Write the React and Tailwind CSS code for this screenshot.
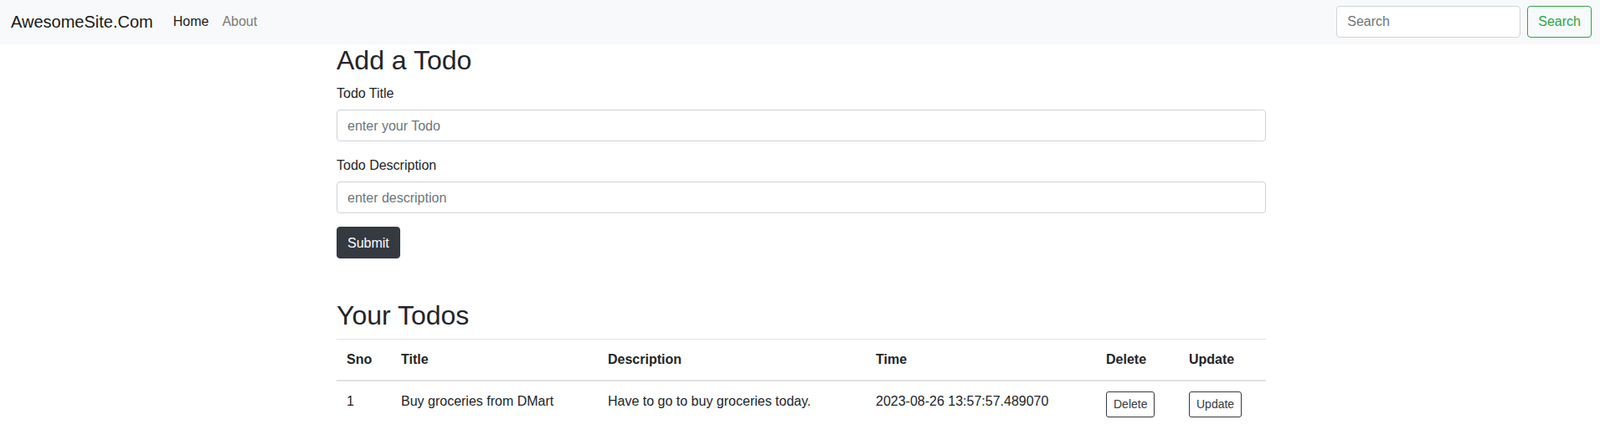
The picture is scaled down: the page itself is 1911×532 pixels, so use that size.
export default function App() {
  return (
    <div className="min-h-screen bg-white text-[#212529] text-[16px] leading-[24px] font-['Liberation_Sans',Arial,sans-serif]">
      <nav className="h-[53px] bg-[#f8f9fa] flex items-center pl-[13px] pr-[10px] pb-[2px]">
        <a href="#" className="text-[20px] leading-[30px] text-[#1a1a1a] mr-4">AwesomeSite.Com</a>
        <ul className="flex">
          <li><a href="#" className="block px-2 py-2 text-[#1a1a1a]">Home</a></li>
          <li><a href="#" className="block px-2 py-2 text-[#7a7a7a]">About</a></li>
        </ul>
        <form className="ml-auto flex" onSubmit={(e) => e.preventDefault()}>
          <input
            type="search"
            placeholder="Search"
            className="w-[220px] h-[38px] px-3 mr-2 border border-[#ced4da] rounded-[4px] bg-white text-[16px] placeholder:text-[#6c757d] outline-none"
          />
          <button type="submit" className="h-[38px] px-3 border border-[#28a745] text-[#28a745] rounded-[4px] bg-transparent text-[16px]">
            Search
          </button>
        </form>
      </nav>

      <div className="mx-auto w-[1113px] pl-[3px]">
        <h2 className="text-[32px] leading-[38.4px] font-normal mb-2">Add a Todo</h2>
        <form onSubmit={(e) => e.preventDefault()}>
          <div className="mb-4">
            <label className="block pt-[1px] mb-[7px]">Todo Title</label>
            <input
              type="text"
              placeholder="enter your Todo"
              className="block w-full h-[38px] px-3 pt-[2px] border border-[#ced4da] rounded-[4px] bg-white placeholder:text-[#6c757d] outline-none"
            />
          </div>
          <div className="mb-4">
            <label className="block pt-[1px] mb-[7px]">Todo Description</label>
            <input
              type="text"
              placeholder="enter description"
              className="block w-full h-[38px] px-3 pt-[2px] border border-[#ced4da] rounded-[4px] bg-white placeholder:text-[#6c757d] outline-none"
            />
          </div>
          <button type="submit" className="h-[38px] px-3 pt-[2px] bg-[#343a40] border border-[#343a40] text-white rounded-[4px]">
            Submit
          </button>
        </form>

        <h2 className="mt-[49px] text-[32px] leading-[38.4px] font-normal mb-2">Your Todos</h2>
        <table className="w-full table-fixed border-collapse">
          <colgroup>
            <col className="w-[65px]" />
            <col className="w-[247px]" />
            <col className="w-[320px]" />
            <col className="w-[275px]" />
            <col className="w-[99px]" />
            <col className="w-[104px]" />
          </colgroup>
          <thead>
            <tr>
              {["Sno", "Title", "Description", "Time", "Delete", "Update"].map((h) => (
                <th key={h} className="text-left font-bold p-3 align-bottom border-t border-b-2 border-[#dee2e6]">
                  {h}
                </th>
              ))}
            </tr>
          </thead>
          <tbody>
            <tr>
              <td className="p-3 align-top border-t border-[#dee2e6]">1</td>
              <td className="p-3 align-top border-t border-[#dee2e6]">Buy groceries from DMart</td>
              <td className="p-3 align-top border-t border-[#dee2e6]">Have to go to buy groceries today.</td>
              <td className="p-3 align-top border-t border-[#dee2e6]">2023-08-26 13:57:57.489070</td>
              <td className="p-3 align-top border-t border-[#dee2e6]">
                <button className="px-2 py-1 text-[14px] leading-[21px] border border-[#343a40] text-[#343a40] rounded-[3px] bg-transparent">
                  Delete
                </button>
              </td>
              <td className="p-3 align-top border-t border-[#dee2e6]">
                <button className="px-2 py-1 text-[14px] leading-[21px] border border-[#343a40] text-[#343a40] rounded-[3px] bg-transparent">
                  Update
                </button>
              </td>
            </tr>
          </tbody>
        </table>
      </div>
    </div>
  );
}
